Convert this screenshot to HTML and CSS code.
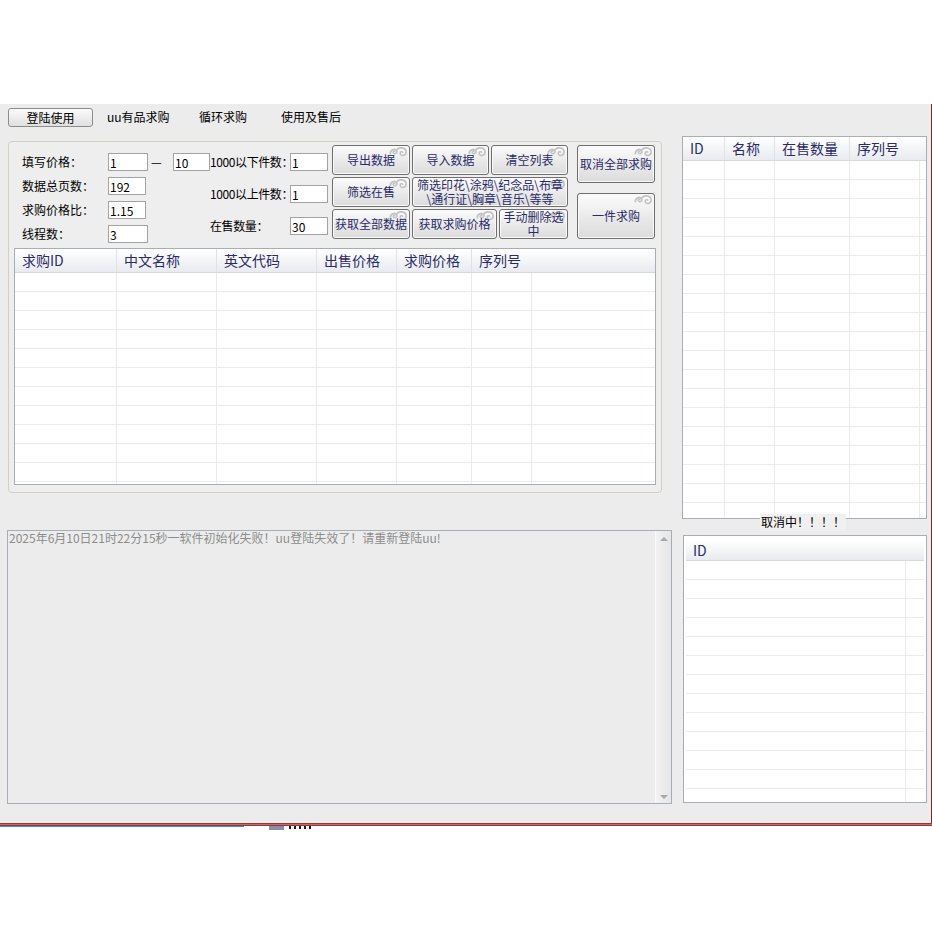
FILE: index.html
```html
<!DOCTYPE html>
<html lang="zh-CN">
<head>
  <meta charset="UTF-8" />
  <title>uu有品求购</title>
  <link rel="stylesheet" href="styles.css">
</head>
<body>
  <svg class="defs" width="0" height="0" aria-hidden="true">
    <symbol id="swirl" viewBox="0 0 20 13">
      <path d="M1.5 8.5 C0.5 3.5, 7 1.5, 8.2 5 C9 7.5, 5.5 8.8, 4.6 6.8 C4 5.4, 5.8 4.6, 6.4 5.6" />
      <path d="M8.2 4 C10 0.5, 17.5 0.8, 18 5.5 C18.4 10, 12.5 11, 11.8 7.6 C11.4 5.6, 14 5, 14.6 6.6" />
    </symbol>
  </svg>

  <div class="window">
    <div class="tabs">
      <span class="tab active">登陆使用</span>
      <span class="tab t2">uu有品求购</span>
      <span class="tab t3">循环求购</span>
      <span class="tab">使用及售后</span>
    </div>

    <div class="main">
      <div class="left">
        <div class="group">
          <div class="controls">
            <div class="fields">
              <div class="row">
                <span class="lbl">填写价格：</span>
                <input type="text" class="w40" value="1" />
                <span class="dash">—</span>
                <input type="text" class="w37" value="10" />
              </div>
              <div class="row">
                <span class="lbl">数据总页数：</span>
                <input type="text" class="w38" value="192" />
              </div>
              <div class="row">
                <span class="lbl">求购价格比：</span>
                <input type="text" class="w38" value="1.15" />
              </div>
              <div class="row">
                <span class="lbl">线程数：</span>
                <input type="text" class="w40" value="3" />
              </div>
            </div>

            <div class="fields mid">
              <div class="row">
                <span class="lbl">1000以下件数：</span>
                <input type="text" class="w38" value="1" />
              </div>
              <div class="row">
                <span class="lbl">1000以上件数：</span>
                <input type="text" class="w38" value="1" />
              </div>
              <div class="row">
                <span class="lbl">在售数量：</span>
                <input type="text" class="w38" value="30" />
              </div>
            </div>

            <div class="btn-grid">
              <div class="btn-row">
                <button class="btn w78"><svg class="orn"><use href="#swirl"/></svg>导出数据</button>
                <button class="btn w77"><svg class="orn"><use href="#swirl"/></svg>导入数据</button>
                <button class="btn w77"><svg class="orn"><use href="#swirl"/></svg>清空列表</button>
              </div>
              <div class="btn-row">
                <button class="btn w78"><svg class="orn"><use href="#swirl"/></svg>筛选在售</button>
                <button class="btn w156 two"><svg class="orn"><use href="#swirl"/></svg>筛选印花\涂鸦\纪念品\布章<br>\通行证\胸章\音乐\等等</button>
              </div>
              <div class="btn-row">
                <button class="btn w78"><svg class="orn"><use href="#swirl"/></svg>获取全部数据</button>
                <button class="btn w85"><svg class="orn"><use href="#swirl"/></svg>获取求购价格</button>
                <button class="btn w69 two"><svg class="orn"><use href="#swirl"/></svg>手动删除选<br>中</button>
              </div>
            </div>

            <div class="side">
              <button class="btn h38"><svg class="orn"><use href="#swirl"/></svg>取消全部求购</button>
              <button class="btn h46"><svg class="orn"><use href="#swirl"/></svg>一件求购</button>
            </div>
          </div>

          <div class="grid main-grid">
            <div class="grid-head">
              <span class="c102">求购ID</span>
              <span class="c100">中文名称</span>
              <span class="c100">英文代码</span>
              <span class="c80">出售价格</span>
              <span class="c75">求购价格</span>
              <span class="fill">序列号</span>
            </div>
            <div class="grid-body">
              <span class="c102"></span>
              <span class="c100"></span>
              <span class="c100"></span>
              <span class="c80"></span>
              <span class="c75"></span>
              <span class="c60"></span>
            </div>
          </div>
        </div>

        <div class="log">
          <div class="log-text">2025年6月10日21时22分15秒一软件初始化失败！uu登陆失效了！请重新登陆uu!</div>
          <div class="scroll">
            <span class="arrow up"></span>
            <span class="arrow down"></span>
          </div>
        </div>
      </div>

      <div class="right">
        <div class="grid side-grid">
          <div class="grid-head">
            <span class="c42">ID</span>
            <span class="c50">名称</span>
            <span class="c75">在售数量</span>
            <span class="fill">序列号</span>
          </div>
          <div class="grid-body">
            <span class="c42"></span>
            <span class="c50"></span>
            <span class="c75"></span>
            <span class="c70"></span>
          </div>
        </div>

        <div class="status">取消中！！！！</div>

        <div class="grid cancel-grid">
          <div class="grid-head">
            <span class="fill">ID</span>
          </div>
          <div class="grid-body">
            <span class="c220"></span>
          </div>
        </div>
      </div>
    </div>
  </div>

  <div class="taskbar"></div>
  <div class="tray">
    <span class="tray-blue"></span>
    <span class="tray-icon"></span>
    <span class="tray-mark"></span>
  </div>
</body>
</html>
```

FILE: styles.css
```css
:root {
  --fundo: #ececec;
  --borda: #a7aeb6;
  --linha: #ebebeb;
  --azul-texto: #2a2a68;
  --vermelho: #7e2323;
}

* {
  box-sizing: border-box;
  margin: 0;
  padding: 0;
}

body {
  width: 932px;
  height: 932px;
  overflow: hidden;
  background: #fff;
  color: #000;
  font-family: "Noto Sans CJK SC", "Noto Sans", sans-serif;
  font-size: 12px;
  line-height: 14px;
}

.defs {
  position: absolute;
  width: 0;
  height: 0;
}

.window {
  margin-top: 104px;
  width: 932px;
  height: 719px;
  background: var(--fundo);
  border-right: 1px solid var(--vermelho);
}

/* abas */
.tabs {
  display: flex;
  align-items: flex-start;
  height: 32px;
  padding: 4px 0 0 8px;
}

.tab {
  height: 19px;
  line-height: 18px;
  padding-left: 14px;
  white-space: nowrap;
}

.tab.active {
  width: 85px;
  padding-left: 0;
  text-align: center;
  border: 1px solid #8c8c8c;
  border-radius: 3px;
  background: linear-gradient(#fbfbfb, #e0e0e0);
}

.t2 { width: 92px; }
.t3 { width: 82px; }

.main {
  display: flex;
  gap: 10px;
  padding-left: 7px;
}

.left {
  width: 665px;
  padding-top: 5px;
}

.group {
  width: 654px;
  height: 352px;
  margin-left: 1px;
  padding: 3px 5px 0;
  border: 1px solid #d2cfc4;
  border-radius: 4px;
  background: #eeeeee;
}

.controls {
  display: flex;
  height: 94px;
  margin-bottom: 9px;
}

.fields {
  display: flex;
  flex-direction: column;
  gap: 6px;
  width: 188px;
  margin-left: 8px;
  padding-top: 8px;
}

.fields.mid {
  width: 120px;
  margin-left: 0;
  gap: 14px;
}

.row {
  display: flex;
  align-items: center;
  height: 18px;
}

.lbl {
  width: 86px;
  white-space: nowrap;
}

.mid .lbl {
  width: 80px;
  letter-spacing: -0.4px;
}

.row input {
  height: 18px;
  padding: 0 1px;
  border: 1px solid #a3a3a3;
  background: #fff;
  color: #000;
  font: inherit;
  line-height: 16px;
  outline: none;
}

.w37 { width: 37px; }
.w38 { width: 38px; }
.w40 { width: 40px; }

.dash {
  width: 25px;
  padding-left: 3px;
}

/* botoes */
.btn-grid {
  display: flex;
  flex-direction: column;
  gap: 2px;
  width: 236px;
  margin-left: 2px;
}

.btn-row {
  display: flex;
  gap: 2px;
  height: 30px;
}

.btn {
  position: relative;
  z-index: 0;
  display: flex;
  align-items: center;
  justify-content: center;
  height: 100%;
  overflow: hidden;
  border: 1px solid #6f6f6f;
  border-radius: 3px;
  background: linear-gradient(#fcfcfc, #e9e9e9 55%, #dcdcdc);
  box-shadow: inset 0 0 0 1px #f8f8f8;
  color: var(--azul-texto);
  font: inherit;
  line-height: 12px;
  text-align: center;
  white-space: nowrap;
  cursor: pointer;
}

.btn.two {
  line-height: 14px;
}

.w69 { width: 69px; }
.w77 { width: 77px; }
.w78 { width: 78px; }
.w85 { width: 85px; }
.w156 { width: 156px; }

.orn {
  position: absolute;
  z-index: -1;
  top: 0;
  right: 1px;
  width: 19px;
  height: 13px;
  fill: none;
  stroke: #c2c2c2;
  stroke-width: 1.7;
}

.side {
  display: flex;
  flex-direction: column;
  gap: 10px;
  width: 78px;
  margin-left: 9px;
}

.h38 { height: 38px; }
.h46 { height: 46px; }

/* tabelas */
.grid {
  display: flex;
  flex-direction: column;
  overflow: hidden;
  border: 1px solid var(--borda);
  background: #fff;
}

.grid-head {
  display: flex;
  flex-shrink: 0;
  height: 24px;
  border-bottom: 1px solid #d6d9de;
  background: linear-gradient(#ffffff, #f3f4f6 55%, #e8eaef);
}

.grid-head span {
  padding-left: 7px;
  border-right: 1px solid #e2e2e2;
  color: var(--azul-texto);
  font-size: 14px;
  line-height: 23px;
  white-space: nowrap;
}

.grid-head .fill {
  flex: 1;
  border-right: none;
}

.grid-body {
  display: flex;
  flex: 1;
  background: repeating-linear-gradient(#fff 0 18px, var(--linha) 18px 19px);
}

.grid-body span {
  border-right: 1px solid var(--linha);
}

.c42 { width: 42px; }
.c50 { width: 50px; }
.c60 { width: 60px; }
.c70 { width: 70px; }
.c75 { width: 75px; }
.c80 { width: 80px; }
.c100 { width: 100px; }
.c102 { width: 102px; }
.c220 { width: 220px; }

.main-grid {
  width: 642px;
  height: 237px;
}

.right {
  display: flex;
  flex-direction: column;
  width: 245px;
}

.side-grid {
  width: 245px;
  height: 383px;
}

.status {
  align-self: flex-start;
  height: 16px;
  margin: -5px 0 0 78px;
  padding: 0 1px;
  background: #f0f0f0;
  line-height: 16px;
}

.cancel-grid {
  width: 244px;
  height: 268px;
  margin: 5px 0 0 1px;
  padding: 4px 2px 0;
}

.cancel-grid .grid-head {
  height: 21px;
}

.cancel-grid .grid-head span {
  line-height: 20px;
}

/* log */
.log {
  display: flex;
  width: 665px;
  height: 274px;
  margin-top: 37px;
  border: 1px solid var(--borda);
  background: var(--fundo);
}

.log-text {
  flex: 1;
  padding: 0 1px;
  color: #8c8c8c;
  line-height: 14px;
  white-space: nowrap;
}

.scroll {
  display: flex;
  flex-direction: column;
  justify-content: space-between;
  align-items: center;
  width: 16px;
  padding: 6px 0 4px;
  border-left: 1px solid #fafafa;
  background: linear-gradient(to right, #f2f2f2, #e6e6e6);
}

.arrow {
  width: 0;
  height: 0;
  border-left: 4px solid transparent;
  border-right: 4px solid transparent;
}

.arrow.up { border-bottom: 4px solid #a8a8a8; }
.arrow.down { border-top: 4px solid #a8a8a8; }

/* barra inferior */
.taskbar {
  width: 932px;
  height: 3px;
  background: linear-gradient(#7a2020, #c46a6a 50%, #7a2020);
}

.tray {
  display: flex;
  align-items: flex-start;
}

.tray-blue {
  width: 244px;
  height: 1px;
  background: #3a92d2;
}

.tray-icon {
  width: 15px;
  height: 4px;
  margin-left: 25px;
  background: #8c8ca8;
}

.tray-mark {
  width: 24px;
  height: 3px;
  margin-left: 5px;
  background: repeating-linear-gradient(to right, #3a0b0b 0 2px, transparent 2px 5px);
}
```
